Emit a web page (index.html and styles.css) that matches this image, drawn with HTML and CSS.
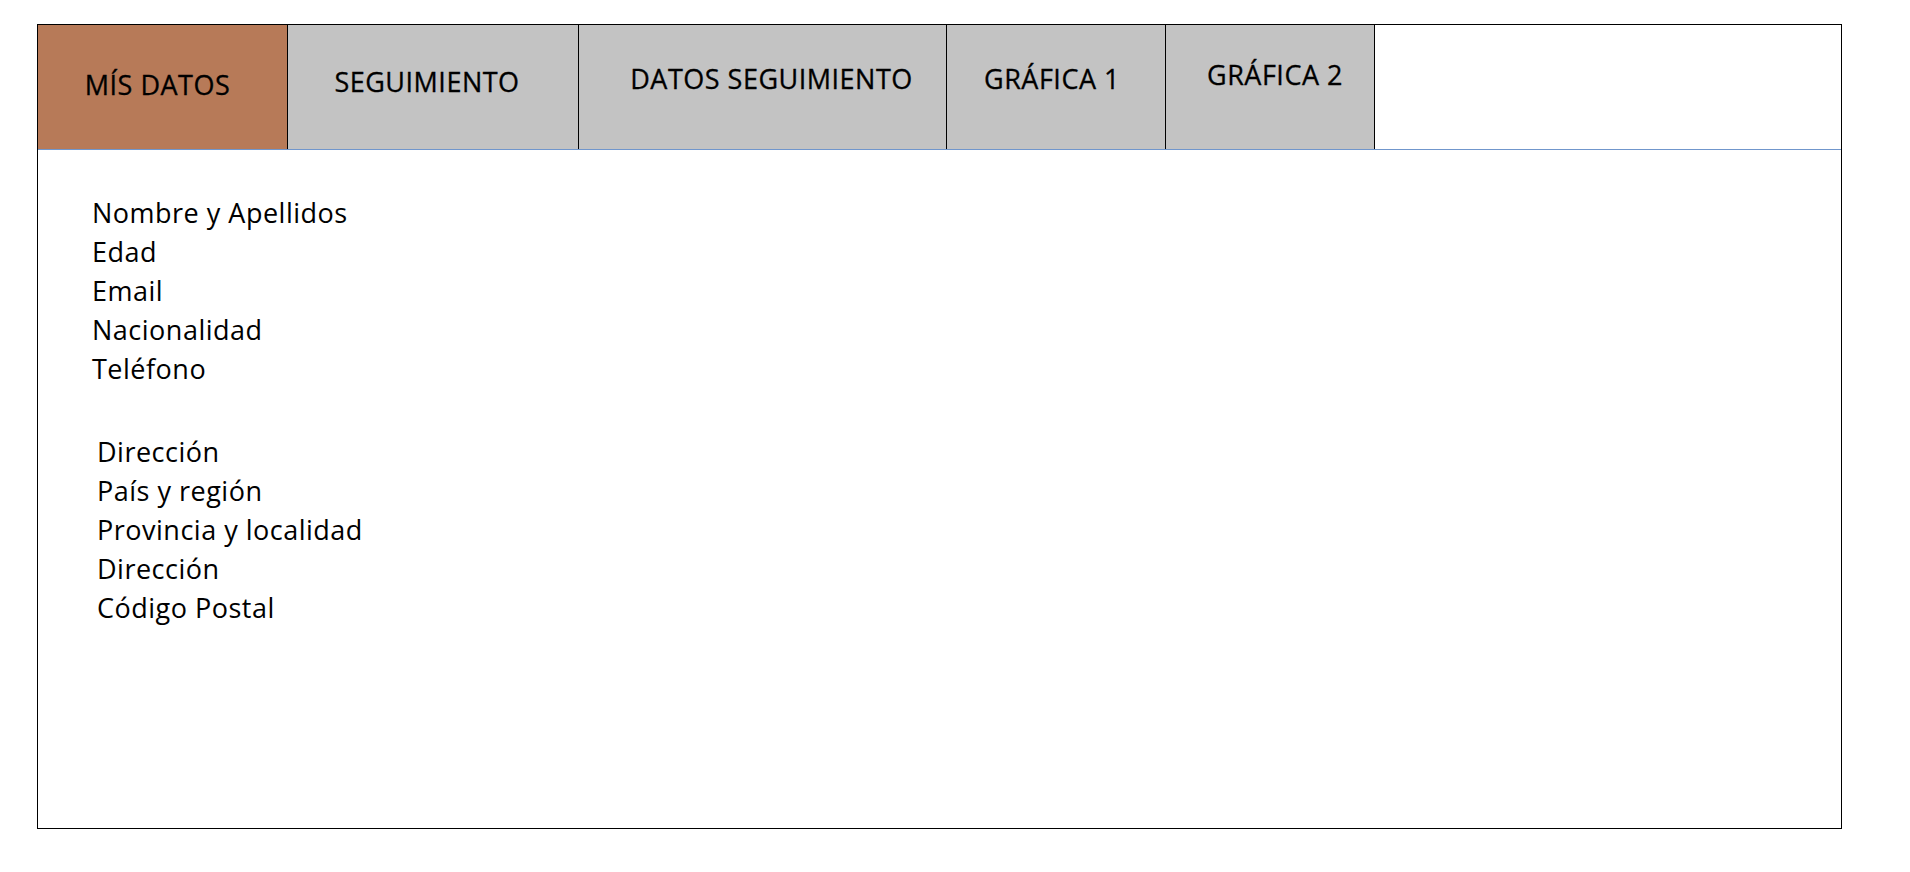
FILE: index.html
```html
<!DOCTYPE html>
<html lang="es">
<head>
<meta charset="utf-8">
<title>Mís datos</title>
<link rel="stylesheet" href="styles.css">
</head>
<body>
<div class="page">
  <div class="panel">
    <div class="tabs">
      <div class="tab tab-active tab-1">MÍS DATOS</div>
      <div class="tab tab-2">SEGUIMIENTO</div>
      <div class="tab tab-3">DATOS SEGUIMIENTO</div>
      <div class="tab tab-4">GRÁFICA 1</div>
      <div class="tab tab-5">GRÁFICA 2</div>
    </div>
    <div class="content">
      <ul class="fields">
        <li>Nombre y Apellidos</li>
        <li>Edad</li>
        <li>Email</li>
        <li>Nacionalidad</li>
        <li>Teléfono</li>
      </ul>
      <ul class="fields fields-address">
        <li>Dirección</li>
        <li>País y región</li>
        <li>Provincia y localidad</li>
        <li>Dirección</li>
        <li>Código Postal</li>
      </ul>
    </div>
  </div>
</div>
</body>
</html>
```

FILE: styles.css
```css
html, body {
  margin: 0;
  padding: 0;
  background: #ffffff;
}

body {
  font-family: "Open Sans", "Noto Sans", "Liberation Sans", sans-serif;
  color: #000000;
}

.page {
  padding: 24px 0 0 37px;
}

.panel {
  width: 1803px;
  height: 803px;
  border: 1px solid #000000;
  display: flex;
  flex-direction: column;
}

.tabs {
  display: flex;
  height: 124px;
  border-bottom: 1px solid #7096cc;
}

.tab {
  box-sizing: border-box;
  height: 124px;
  border-right: 1px solid #000000;
  background: #c3c3c3;
  font-size: 27px;
  letter-spacing: 0.5px;
  line-height: 36px;
  text-align: center;
  white-space: nowrap;
  -webkit-text-stroke: 0.3px #000000;
}

.tab-active {
  background: #b77a58;
}

.tab-1 { width: 250px; padding: 42px 10px 0 0; }
.tab-2 { width: 291px; padding: 39px 12px 0 0; }
.tab-3 { width: 368px; padding: 36px 0 0 18px; }
.tab-4 { width: 219px; padding: 36px 8px 0 0; }
.tab-5 { width: 209px; padding: 32px 0 0 10px; }

.content {
  padding: 43px 0 0 54px;
}

.fields {
  list-style: none;
  margin: 0;
  padding: 0;
  font-size: 27px;
  letter-spacing: 0.5px;
  line-height: 39px;
}

.fields-address {
  margin-top: 44px;
  padding-left: 5px;
}
```
